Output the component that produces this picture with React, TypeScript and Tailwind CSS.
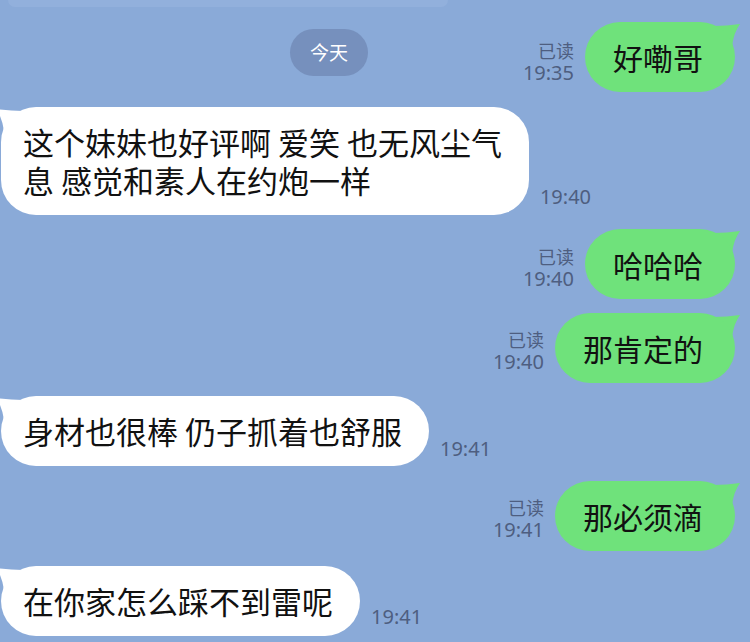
import React from 'react';

const cjk = { fontFamily: '"Noto Sans CJK SC", "Noto Sans", sans-serif' };
const meta = { fontFamily: '"Noto Sans", "Noto Sans CJK SC", sans-serif' };

const GreenTail = () => (
  <svg className="absolute -right-[6px] top-0" width="28" height="24" viewBox="0 0 28 24">
    <path d="M0 4 Q14 4 27 2 Q21 10 19 24 L0 24 Z" fill="#6fe27b" />
  </svg>
);

const WhiteTail = () => (
  <svg className="absolute -left-[6px] top-0" width="28" height="24" viewBox="0 0 28 24">
    <path d="M28 4 Q14 4 1 2 Q7 10 9 24 L28 24 Z" fill="#ffffff" />
  </svg>
);

const MyBubble: React.FC<{ text: string; time: string; mt: string; labelMb: string }> = ({ text, time, mt, labelMb }) => (
  <div className={`flex items-end justify-end pr-[15px] ${mt}`}>
    <div className={`flex flex-col items-end mr-[11px] text-[#4e5e80] ${labelMb}`}>
      <span style={cjk} className="block text-[18px] leading-[22px]">已读</span>
      <span style={meta} className="block text-[20px] leading-[23px]">{time}</span>
    </div>
    <div className="relative">
      <GreenTail />
      <div className="relative h-[70px] flex items-center rounded-[35px] bg-[#6fe27b] pl-[28px] pr-[32px] text-[30px] leading-[38px] text-[#111]" style={cjk}>
        {text}
      </div>
    </div>
  </div>
);

const TheirBubble: React.FC<{ lines: string[]; time: string; mt: string; labelMb: string }> = ({ lines, time, mt, labelMb }) => (
  <div className={`flex items-end pl-[1px] ${mt}`}>
    <div className="relative">
      <WhiteTail />
      <div className="relative rounded-[35px] bg-white pl-[22px] pr-[27px] py-[16px] text-[31px] leading-[38px] text-[#111]" style={cjk}>
        {lines.map((l, i) => (
          <div key={i} className="whitespace-pre">{l}</div>
        ))}
      </div>
    </div>
    <span className={`ml-[11px] text-[20px] leading-[23px] text-[#4e5e80] ${labelMb}`} style={meta}>
      {time}
    </span>
  </div>
);

export default function App() {
  return (
    <div className="w-[750px] h-[642px] overflow-hidden bg-[#8aaad8]">
      <div className="ml-[8px] h-[7px] w-[440px] rounded-b-[18px] bg-[#92b0dc]" />

      {/* date pill + first message share a row */}
      <div className="mt-[15px] flex items-start">
        <div className="ml-[290px] mt-[7px] flex h-[47px] w-[78px] items-center justify-center rounded-full bg-[#7690bd] text-[19px] text-white" style={cjk}>
          今天
        </div>
        <div className="ml-auto">
          <MyBubble text="好嘞哥" time="19:35" mt="" labelMb="mb-[8px]" />
        </div>
      </div>

      <TheirBubble
        lines={['这个妹妹也好评啊 爱笑 也无风尘气', '息 感觉和素人在约炮一样']}
        time="19:40"
        mt="mt-[15px]"
        labelMb="mb-[7px]"
      />

      <MyBubble text="哈哈哈" time="19:40" mt="mt-[14px]" labelMb="mb-[9px]" />
      <MyBubble text="那肯定的" time="19:40" mt="mt-[14px]" labelMb="mb-[10px]" />

      <TheirBubble lines={['身材也很棒 仍子抓着也舒服']} time="19:41" mt="mt-[13px]" labelMb="mb-[6px]" />

      <MyBubble text="那必须滴" time="19:41" mt="mt-[15px]" labelMb="mb-[10px]" />

      <TheirBubble lines={['在你家怎么踩不到雷呢']} time="19:41" mt="mt-[15px]" labelMb="mb-[8px]" />
    </div>
  );
}
